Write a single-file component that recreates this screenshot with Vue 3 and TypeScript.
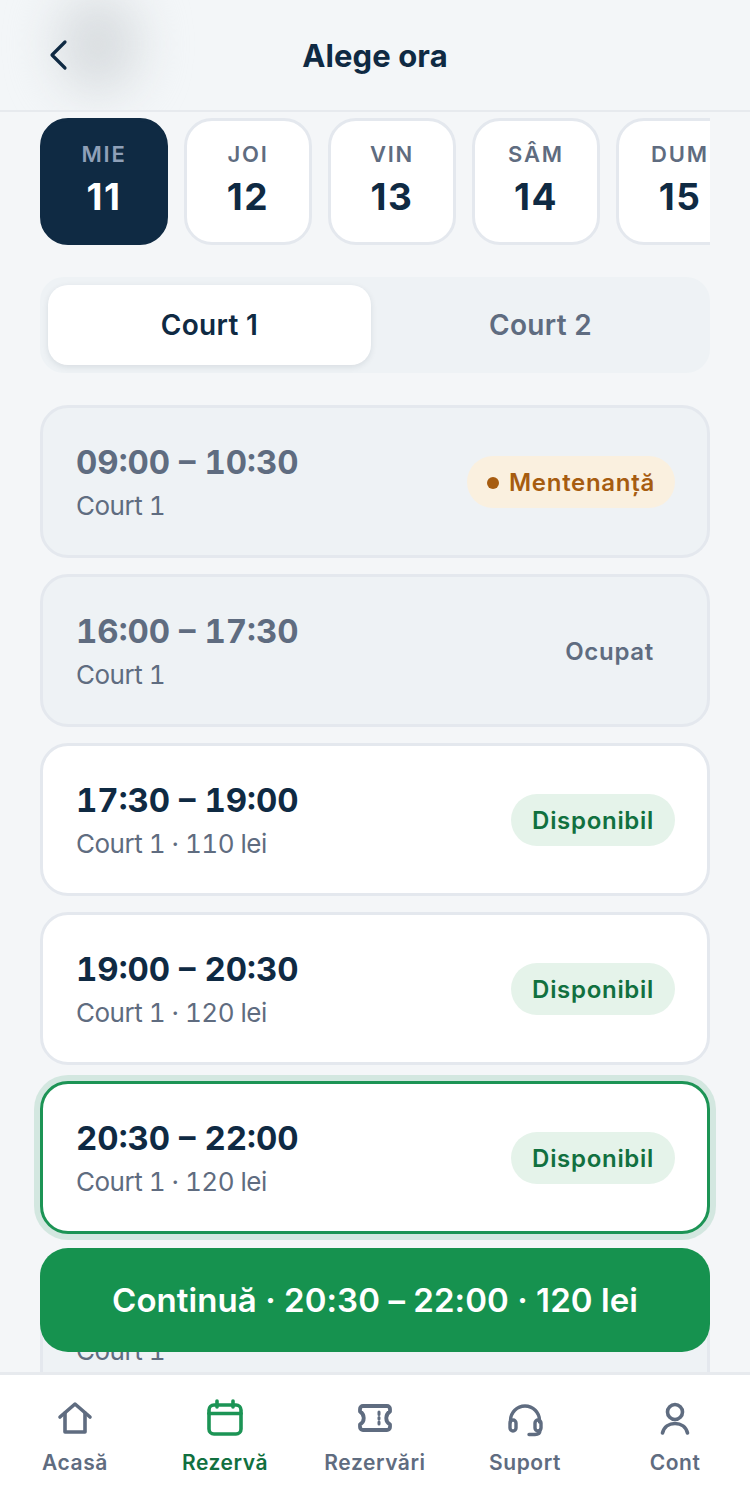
<template>
  <div class="screen">
    <header class="top-bar">
      <div class="top-blur"></div>
      <button class="back-btn" type="button" aria-label="Înapoi">
        <svg width="24" height="36" viewBox="0 0 24 36" fill="none">
          <path d="M18 5 L5 18 L18 31" stroke="#0f2a43" stroke-width="3.2" stroke-linecap="round" stroke-linejoin="round" />
        </svg>
      </button>
      <h1 class="title">Alege ora</h1>
    </header>

    <main class="content">
      <div class="days">
        <div v-for="day in days" :key="day.num" class="day" :class="{ active: day.num === selectedDay }">
          <span class="day-name">{{ day.name }}</span>
          <span class="day-num">{{ day.num }}</span>
        </div>
      </div>

      <div class="courts">
        <div v-for="court in courts" :key="court" class="court-tab" :class="{ active: court === selectedCourt }">
          {{ court }}
        </div>
      </div>

      <div class="slots">
        <div v-for="slot in slots" :key="slot.time" class="slot" :class="[slot.status, { selected: slot.selected }]">
          <div class="slot-info">
            <div class="slot-time">{{ slot.time }}</div>
            <div class="slot-sub">{{ slot.sub }}</div>
          </div>
          <span v-if="slot.status === 'maintenance'" class="badge badge-maintenance">
            <i class="dot"></i>Mentenanță
          </span>
          <span v-else-if="slot.status === 'busy'" class="badge badge-busy">Ocupat</span>
          <span v-else-if="slot.status === 'free'" class="badge badge-free">Disponibil</span>
        </div>
      </div>

      <button class="continue-btn" type="button">Continuă · 20:30 – 22:00 · 120 lei</button>
    </main>

    <nav class="tabbar">
      <div class="tab">
        <svg class="tab-icon" viewBox="0 0 48 48" fill="none" stroke="currentColor" stroke-width="3.6" stroke-linecap="round" stroke-linejoin="round">
          <path d="M9 22 L24 9 L39 22" />
          <path d="M14 18 V37 H34 V18" />
        </svg>
        <span>Acasă</span>
      </div>
      <div class="tab tab-active">
        <svg class="tab-icon" viewBox="0 0 48 48" fill="none" stroke="#1c9455" stroke-width="3.6" stroke-linecap="round" stroke-linejoin="round">
          <rect x="8" y="10" width="32" height="29" rx="5" />
          <path d="M8 18.500 H40" />
          <path d="M16 6 V12" />
          <path d="M32 6 V12" />
        </svg>
        <span>Rezervă</span>
      </div>
      <div class="tab">
        <svg class="tab-icon" viewBox="0 0 48 48" fill="none" stroke="currentColor" stroke-width="3.8" stroke-linecap="round" stroke-linejoin="round">
          <path d="M12 11 H36 A3 3 0 0 1 39 14 V16.500 A7.500 7.500 0 0 0 39 29.500 V32 A3 3 0 0 1 36 35 H12 A3 3 0 0 1 9 32 V29.500 A7.500 7.500 0 0 0 9 16.500 V14 A3 3 0 0 1 12 11 Z" />
          <path d="M28 17 V19.500 M28 22.500 V24 M28 27 V29" stroke-width="3" />
        </svg>
        <span>Rezervări</span>
      </div>
      <div class="tab">
        <svg class="tab-icon" viewBox="0 0 48 48" fill="none" stroke="currentColor" stroke-width="3.4" stroke-linecap="round" stroke-linejoin="round">
          <path d="M9.500 27 V25.500 A14.500 14.500 0 0 1 38.500 25.500 V27" />
          <rect x="9" y="25" width="6" height="11" rx="3" />
          <rect x="34" y="25" width="6" height="11" rx="3" />
          <path d="M39 35 Q39 39.500 34 39.500 H28" />
        </svg>
        <span>Suport</span>
      </div>
      <div class="tab">
        <svg class="tab-icon" viewBox="0 0 48 48" fill="none" stroke="currentColor" stroke-width="3.6" stroke-linecap="round" stroke-linejoin="round">
          <circle cx="24" cy="17" r="7.500" />
          <path d="M11.500 38 C13 32 18 28.500 24 28.500 C30 28.500 35 32 36.500 38" />
        </svg>
        <span>Cont</span>
      </div>
    </nav>
  </div>
</template>

<script setup lang="ts">
interface Day {
  name: string
  num: number
}

interface Slot {
  time: string
  sub: string
  status: 'maintenance' | 'busy' | 'free' | 'covered'
  selected?: boolean
}

const selectedDay = 11
const selectedCourt = 'Court 1'

const days: Day[] = [
  { name: 'MIE', num: 11 },
  { name: 'JOI', num: 12 },
  { name: 'VIN', num: 13 },
  { name: 'SÂM', num: 14 },
  { name: 'DUM', num: 15 }
]

const courts = ['Court 1', 'Court 2']

// the last row sits behind the continue button, only its court name shows
const slots: Slot[] = [
  { time: '09:00 – 10:30', sub: 'Court 1', status: 'maintenance' },
  { time: '16:00 – 17:30', sub: 'Court 1', status: 'busy' },
  { time: '17:30 – 19:00', sub: 'Court 1 · 110 lei', status: 'free' },
  { time: '19:00 – 20:30', sub: 'Court 1 · 120 lei', status: 'free' },
  { time: '20:30 – 22:00', sub: 'Court 1 · 120 lei', status: 'free', selected: true },
  { time: '', sub: 'Court 1', status: 'covered' }
]
</script>

<style>
html,
body {
  margin: 0;
  background: #f4f6f8;
}
</style>

<style scoped>
.screen {
  position: relative;
  display: flex;
  flex-direction: column;
  width: 750px;
  height: 1500px;
  overflow: hidden;
  background: #f4f6f8;
  font-family: Inter, 'Liberation Sans', sans-serif;
  color: #0f2a43;
}

.top-bar {
  position: relative;
  flex: none;
  height: 110px;
  display: flex;
  align-items: center;
  justify-content: center;
  overflow: hidden;
  background: #f3f6f8;
  border-bottom: 2px solid #e7eaee;
}

.top-blur {
  position: absolute;
  left: 56px;
  top: -6px;
  width: 84px;
  height: 100px;
  border-radius: 50%;
  background: #d9dde0;
  filter: blur(24px);
}

.back-btn {
  position: absolute;
  left: 47px;
  top: 37px;
  padding: 0;
  border: 0;
  background: none;
  line-height: 0;
}

.title {
  position: relative;
  margin: 0;
  font-size: 31px;
  font-weight: 700;
  letter-spacing: 0.1px;
}

.content {
  position: relative;
  flex: 1;
  min-height: 0;
  overflow: hidden;
  padding: 6px 40px 0;
}

.days {
  display: flex;
  gap: 16px;
  overflow: hidden;
}

.day {
  flex: none;
  box-sizing: border-box;
  width: 128px;
  height: 127px;
  display: flex;
  flex-direction: column;
  align-items: center;
  padding-top: 20px;
  border: 3px solid #e4e8ee;
  border-radius: 28px;
  background: #fff;
}

.day.active {
  border-color: #0f2a43;
  background: #0f2a43;
}

.day-name {
  font-size: 22px;
  line-height: 26px;
  font-weight: 600;
  letter-spacing: 1.8px;
  color: #5f6c80;
}

.day.active .day-name {
  color: #8fa0b8;
}

.day-num {
  margin-top: 8px;
  font-size: 37px;
  line-height: 44px;
  font-weight: 700;
  letter-spacing: 1.5px;
  color: #0f2a43;
}

.day.active .day-num {
  color: #fff;
}

.courts {
  display: flex;
  gap: 8px;
  margin-top: 32px;
  padding: 8px;
  border-radius: 24px;
  background: #eef2f5;
}

.court-tab {
  flex: 1;
  height: 80px;
  display: flex;
  align-items: center;
  justify-content: center;
  border-radius: 20px;
  font-size: 28px;
  font-weight: 600;
  letter-spacing: 0.3px;
  color: #5f6c80;
}

.court-tab.active {
  background: #fff;
  color: #0f2a43;
  box-shadow: 0 2px 6px rgba(16, 39, 63, 0.1);
}

.slots {
  display: flex;
  flex-direction: column;
  gap: 16px;
  margin-top: 32px;
}

.slot {
  flex: none;
  box-sizing: border-box;
  height: 153px;
  display: flex;
  align-items: center;
  justify-content: space-between;
  padding: 0 32px 0 33px;
  border: 3px solid #e4e8ee;
  border-radius: 28px;
  background: #fff;
}

.slot.maintenance,
.slot.busy,
.slot.covered {
  background: #eef2f5;
}

.slot.selected {
  border-color: #1c9455;
  box-shadow: 0 0 0 6px rgba(28, 148, 85, 0.15);
}

.slot-time {
  min-height: 40px;
  font-size: 33px;
  line-height: 40px;
  font-weight: 700;
  font-variant-numeric: tabular-nums;
}

.maintenance .slot-time,
.busy .slot-time {
  color: #5f6c80;
}

.slot-sub {
  margin-top: 8px;
  font-size: 26px;
  line-height: 32px;
  font-variant-numeric: tabular-nums;
  letter-spacing: -0.5px;
  color: #5f6c80;
}

.badge {
  display: inline-flex;
  align-items: center;
  height: 52px;
  padding: 2px 21px 0;
  box-sizing: border-box;
  border-radius: 26px;
  font-size: 24px;
  font-weight: 600;
  letter-spacing: 0.7px;
}

.badge-maintenance {
  padding: 2px 20px 0 20px;
  background: #faf0df;
  color: #a65c10;
}

.dot {
  width: 12px;
  height: 12px;
  margin-right: 10px;
  border-radius: 50%;
  background: #a65c10;
}

.badge-busy {
  color: #5f6c80;
}

.badge-free {
  background: #e5f3ea;
  color: #11703f;
}

.continue-btn {
  position: absolute;
  left: 40px;
  right: 40px;
  bottom: 20px;
  height: 104px;
  border: 0;
  border-radius: 28px;
  background: #16924f;
  color: #fff;
  font-family: inherit;
  font-size: 33px;
  font-weight: 600;
  letter-spacing: 0.06px;
}

.tabbar {
  flex: none;
  height: 128px;
  box-sizing: border-box;
  display: flex;
  border-top: 3px solid #e7eaee;
  background: #fff;
  color: #5f6c80;
}

.tab {
  flex: 1;
  display: flex;
  flex-direction: column;
  align-items: center;
  padding-top: 20px;
  font-size: 21px;
  line-height: 26px;
  font-weight: 600;
  letter-spacing: 0.55px;
}

.tab-icon {
  width: 48px;
  height: 48px;
  margin-bottom: 7px;
}

.tab-active {
  color: #11703f;
}
</style>
